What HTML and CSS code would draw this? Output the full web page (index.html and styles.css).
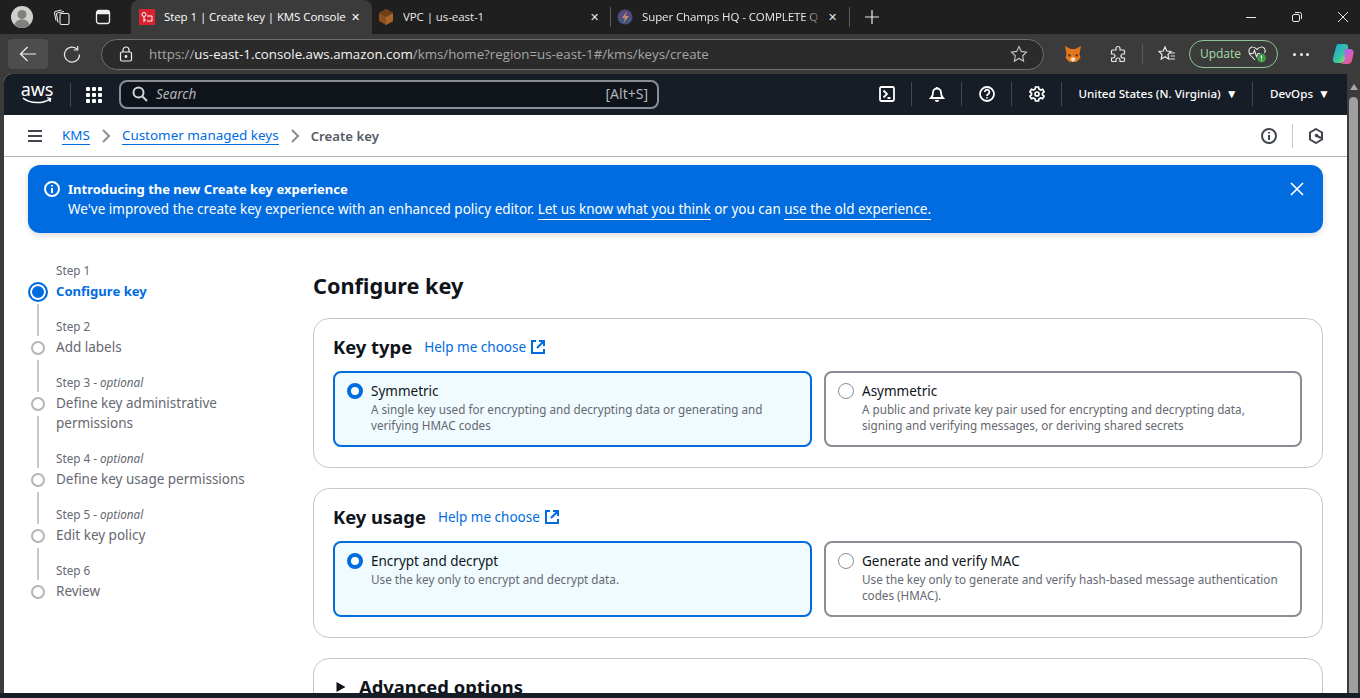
FILE: index.html
```html
<!DOCTYPE html>
<html lang="en">
<head>
<meta charset="utf-8">
<title>Step 1 | Create key | KMS Console</title>
<link rel="stylesheet" href="styles.css">
</head>
<body>
<div class="tabstrip">
  <div class="strip-left">
    <span class="avatar"><svg viewBox="0 0 22 22" width="22" height="22"><circle cx="11" cy="11" r="11" fill="#cfcfcb"/><circle cx="11" cy="8.500" r="4.500" fill="#7f7f7f"/><path d="M3.500 19c1-4 4-5.500 7.500-5.500s6.500 1.500 7.500 5.500a11 11 0 0 1-15 0z" fill="#7f7f7f"/></svg></span>
    <svg class="ic-chrome" viewBox="0 0 18 18" width="18" height="18" fill="none" stroke="#e8e8e8" stroke-width="1.100"><rect x="7" y="5.500" width="9" height="11" rx="1.500" transform="skewY(-8 11 11)"/><path d="M5 14.500L3.500 6.500c-.1-.8.300-1.300 1-1.500L11 3.500"/><path d="M3 12.500L1.500 5c-.1-.8.300-1.300 1-1.500L8.500 2"/></svg>
    <svg class="ic-chrome" viewBox="0 0 18 18" width="18" height="18" fill="none" stroke="#f0f0f0" stroke-width="1.300"><rect x="2.500" y="2.500" width="13" height="13" rx="2.500"/><path d="M3 4.500h12" stroke-width="3.500"/></svg>
  </div>
  <div class="tab tab-active">
    <svg class="fav" viewBox="0 0 16 16" width="16" height="16"><rect width="16" height="16" fill="#d9232e"/><circle cx="5" cy="5.500" r="2" fill="none" stroke="#fff"/><path d="M5 7.500v5.500M5 11h2M8 7h5v5H8" fill="none" stroke="#fff"/></svg>
    <span class="tab-title">Step 1 | Create key | KMS Console</span>
    <span class="tab-x">✕</span>
  </div>
  <div class="tab tab-two">
    <svg class="fav" viewBox="0 0 16 16" width="16" height="16"><path d="M8 0l7 4v8l-7 4-7-4V4z" fill="#8a4f1d"/><path d="M8 8l7-4v8l-7 4z" fill="#a8652a"/><path d="M8 0l7 4-7 4-7-4z" fill="#6f3f17"/></svg>
    <span class="tab-title">VPC | us-east-1</span>
    <span class="tab-x">✕</span>
  </div>
  <span class="tab-sep"></span>
  <div class="tab tab-three">
    <svg class="fav" viewBox="0 0 16 16" width="16" height="16"><circle cx="8" cy="8" r="7.500" fill="#54487e"/><path d="M1.500 10c2 4 7 5.500 11 3.500l2-4z" fill="#3c5a78"/><path d="M10 2L5 9h3l-1.500 5L12 7H8.500z" fill="#c58a6a"/></svg>
    <span class="tab-title tab-clip">Super Champs HQ - COMPLETE Q</span>
    <span class="tab-x">✕</span>
  </div>
  <span class="tab-sep"></span>
  <svg class="ic-plus" viewBox="0 0 16 16" width="16" height="16" stroke="#e8e8e8" stroke-width="1.200"><path d="M8 1v14M1 8h14"/></svg>
  <div class="window-btns">
    <svg viewBox="0 0 12 12" width="12" height="12" stroke="#e8e8e8"><path d="M1 6.500h10"/></svg>
    <svg viewBox="0 0 12 12" width="12" height="12" stroke="#e8e8e8" fill="none"><rect x="1.500" y="3.500" width="7" height="7" rx="1.500"/><path d="M4 1.500h4.500a2 2 0 0 1 2 2V8"/></svg>
    <svg viewBox="0 0 12 12" width="12" height="12" stroke="#e8e8e8"><path d="M1 1l10 10M11 1L1 11"/></svg>
  </div>
</div>

<div class="toolbar">
  <span class="back-btn"><svg viewBox="0 0 18 18" width="18" height="18" fill="none" stroke="#f0f0f0" stroke-width="1.200"><path d="M17 9H1.500M8.500 2l-7 7 7 7"/></svg></span>
  <svg class="reload" viewBox="0 0 18 18" width="18" height="18" fill="none" stroke="#e8e8e8" stroke-width="1.200"><path d="M14.500 4.500A7.500 7.500 0 1 0 16.500 9.500"/><path d="M14.700 1v4h-4"/></svg>
  <div class="omnibox">
    <svg class="lock" viewBox="0 0 14 16" width="14" height="16" fill="none" stroke="#f0f0f0" stroke-width="1.200"><rect x="1.500" y="6" width="11" height="9" rx="1.500"/><path d="M4 6V4a3 3 0 0 1 6 0v2"/><circle cx="7" cy="10.500" r=".8" fill="#f0f0f0"/></svg>
    <span class="url"><span class="url-dim">https://</span><span class="url-host">us-east-1.console.aws.amazon.com</span><span class="url-dim">/kms/home?region=us-east-1#/kms/keys/create</span></span>
    <svg viewBox="0 0 18 18" width="18" height="18" fill="none" stroke="#c4c4c4" stroke-width="1.100"><path d="M9 1.500l2.300 4.900 5.200.7-3.800 3.700.9 5.300L9 13.500l-4.600 2.600.9-5.300L1.500 7.100l5.200-.7z"/></svg>
  </div>
  <svg class="fox" viewBox="0 0 18 18" width="18" height="18"><path d="M1 1l6 3h4l6-3-1.500 8 1 4-4 4H5.500l-4-4 1-4z" fill="#e2761b"/><path d="M6 14l3 3 3-3-3-2z" fill="#f5e1cc"/><path d="M4 9l3 1-2 2zM14 9l-3 1 2 2z" fill="#3a2a1a"/></svg>
  <svg class="ext" viewBox="0 0 18 18" width="18" height="18" fill="none" stroke="#e8e8e8" stroke-width="1.200"><path d="M7 3.500a2 2 0 1 1 4 0V5h3.500a1 1 0 0 1 1 1v3h-1.500a2 2 0 1 0 0 4h1.500v2.500a1 1 0 0 1-1 1H11V15a2 2 0 1 0-4 0v1.500H3.500a1 1 0 0 1-1-1V13H4a2 2 0 1 0 0-4H2.500V6a1 1 0 0 1 1-1H7z"/></svg>
  <span class="bar-sep"></span>
  <svg class="favs" viewBox="0 0 18 18" width="18" height="18" fill="none" stroke="#e8e8e8" stroke-width="1.200"><path d="M7 2l1.800 4 4.200.5-3 3 .8 4.500L7 11.800 3.200 14l.8-4.500-3-3L5.200 6z"/><path d="M12 8h5M12.500 11h4.500M11.500 14h5.500"/></svg>
  <div class="update"><span>Update</span><svg viewBox="0 0 20 18" width="20" height="18" fill="none" stroke="#e8e8e8" stroke-width="1.100"><path d="M8 15L2.500 9C.5 5.500 3 1.500 6 2c2 .2 3 1.500 4 2.500C11 3.500 12 2.200 14 2c3-.5 5.500 3 3.500 6"/><path d="M2 8.500h4l1.500-3 2 6 1.500-3h2"/><circle cx="14.500" cy="13" r="4.500" fill="#3c9a4a" stroke="none"/><path d="M14.500 10.500v3M14.500 14.800v1" stroke="#fff"/></svg></div>
  <span class="dots"><i></i><i></i><i></i></span>
  <svg class="copilot" viewBox="0 0 22 22" width="22" height="22"><defs><linearGradient id="cp1" x1="0" y1="0" x2="1" y2="1"><stop offset="0" stop-color="#1f9fe8"/><stop offset=".6" stop-color="#39c79a"/><stop offset="1" stop-color="#e8d13c"/></linearGradient><linearGradient id="cp2" x1="0" y1="0" x2="1" y2="1"><stop offset="0" stop-color="#6d7ff0"/><stop offset=".5" stop-color="#d25fd0"/><stop offset="1" stop-color="#f05a50"/></linearGradient></defs><path d="M6.500 1h7c2 0 3 2 2.500 4L13 16.500c-.5 2-2 3.500-4 3.500H4C1.500 20 .5 17.500 1 15.500L4 4c.3-1.800 1.500-3 2.500-3z" fill="url(#cp1)"/><path d="M12 6h5.500c3 0 4.500 2 4 4.500l-1.500 7c-.5 2-2 3.500-4 3.500H9c3-1 3.500-3 4-5z" fill="url(#cp2)"/></svg>
</div>

<div class="viewport">
  <div class="page">
    <header class="topnav">
      <div class="aws-logo"><span class="aws-word">aws</span><svg viewBox="0 0 32 8" width="31" height="8" fill="none" stroke="#fff" stroke-width="1.500"><path d="M1 1c8 6 20 6 28 1M26 0.800l3.500.6-.7 3.600"/></svg></div>
      <span class="nav-sep nav-sep-logo"></span>
      <span class="grid9"><i></i><i></i><i></i><i></i><i></i><i></i><i></i><i></i><i></i></span>
      <div class="search">
        <svg viewBox="0 0 16 16" width="16" height="16" fill="none" stroke="#d1d5db" stroke-width="2"><circle cx="6.500" cy="6.500" r="5"/><path d="M10.500 10.500L15 15"/></svg>
        <span class="search-ph">Search</span>
        <span class="search-key">[Alt+S]</span>
      </div>
      <div class="nav-right">
        <span class="nav-item"><svg viewBox="0 0 16 16" width="16" height="16" fill="none" stroke="#fff" stroke-width="1.800"><rect x="1" y="1" width="14" height="14" rx="1.500"/><path d="M4.500 4.500L8 8l-3.500 3.500M8.500 12h3"/></svg></span>
        <span class="nav-item"><svg viewBox="0 0 16 16" width="16" height="16" fill="none" stroke="#fff" stroke-width="1.800"><path d="M2 12h12c-1.500-1.500-2-2.500-2-5.500a4 4 0 0 0-8 0c0 3-.5 4-2 5.500zM6.500 14a1.600 1.600 0 0 0 3 0M8 2.500V1"/></svg></span>
        <span class="nav-item"><svg viewBox="0 0 16 16" width="16" height="16" fill="none" stroke="#fff" stroke-width="1.800"><circle cx="8" cy="8" r="7"/><path d="M5.800 6a2.300 2.300 0 1 1 3.500 2c-.9.500-1.300 1-1.300 2M8 11.200v1.300"/></svg></span>
        <span class="nav-item"><svg viewBox="0 0 16 16" width="16" height="16" fill="none" stroke="#fff" stroke-width="1.700"><path d="M6.500 1h3l.4 2 1.700 1 2-.7 1.500 2.600-1.600 1.300v1.600l1.600 1.300-1.500 2.600-2-.7-1.700 1-.4 2h-3l-.4-2-1.700-1-2 .7L.9 10.100l1.600-1.300V7.200L.9 5.900l1.500-2.600 2 .7 1.700-1z"/><circle cx="8" cy="8" r="2"/></svg></span>
        <span class="nav-item nav-text nav-region">United States (N. Virginia) <b class="caret">▼</b></span>
        <span class="nav-item nav-text nav-user">DevOps <b class="caret">▼</b></span>
      </div>
    </header>

    <div class="crumbs">
      <svg class="burger" viewBox="0 0 16 16" width="16" height="16" stroke="#424650" stroke-width="2"><path d="M1 3h14M1 8h14M1 13h14"/></svg>
      <a class="crumb-link">KMS</a>
      <svg class="chev" viewBox="0 0 10 16" width="10" height="16" fill="none" stroke="#8c8c94" stroke-width="2"><path d="M2 2l6 6-6 6"/></svg>
      <a class="crumb-link">Customer managed keys</a>
      <svg class="chev" viewBox="0 0 10 16" width="10" height="16" fill="none" stroke="#8c8c94" stroke-width="2"><path d="M2 2l6 6-6 6"/></svg>
      <span class="crumb-now">Create key</span>
      <div class="crumb-tools">
        <svg viewBox="0 0 16 16" width="16" height="16" fill="none" stroke="#424650" stroke-width="2"><circle cx="8" cy="8" r="7"/><path d="M8 7v5M8 4v1.600"/></svg>
        <span class="tool-sep"></span>
        <svg viewBox="0 0 16 16" width="16" height="16" fill="none" stroke="#424650" stroke-width="2"><path d="M8 1l6 3.500v7L8 15l-6-3.500v-7z"/><circle cx="8.500" cy="7.500" r="1.800" fill="#424650" stroke="none"/><path d="M9 8l4 2" /></svg>
      </div>
    </div>

    <div class="banner">
      <svg class="banner-ic" viewBox="0 0 16 16" width="16" height="16" fill="none" stroke="#fff" stroke-width="2"><circle cx="8" cy="8" r="7"/><path d="M8 7v5M8 4v1.600"/></svg>
      <div class="banner-text">
        <div class="banner-title">Introducing the new Create key experience</div>
        <div>We've improved the create key experience with an enhanced policy editor. <a class="banner-link">Let us know what you think</a> or you can <a class="banner-link">use the old experience.</a></div>
      </div>
      <svg class="banner-x" viewBox="0 0 16 16" width="16" height="16" stroke="#fff" stroke-width="1.700"><path d="M2 2l12 12M14 2L2 14"/></svg>
    </div>

    <div class="main">
      <nav class="steps">
        <div class="step">
          <div class="rail"><span class="dot dot-on"></span><span class="line"></span></div>
          <div class="step-body"><div class="step-no">Step 1</div><div class="step-name step-name-on">Configure key</div></div>
        </div>
        <div class="step">
          <div class="rail"><span class="dot"></span><span class="line"></span></div>
          <div class="step-body"><div class="step-no">Step 2</div><div class="step-name">Add labels</div></div>
        </div>
        <div class="step">
          <div class="rail"><span class="dot"></span><span class="line"></span></div>
          <div class="step-body"><div class="step-no">Step 3 - <em>optional</em></div><div class="step-name">Define key administrative permissions</div></div>
        </div>
        <div class="step">
          <div class="rail"><span class="dot"></span><span class="line"></span></div>
          <div class="step-body"><div class="step-no">Step 4 - <em>optional</em></div><div class="step-name">Define key usage permissions</div></div>
        </div>
        <div class="step">
          <div class="rail"><span class="dot"></span><span class="line"></span></div>
          <div class="step-body"><div class="step-no">Step 5 - <em>optional</em></div><div class="step-name">Edit key policy</div></div>
        </div>
        <div class="step step-last">
          <div class="rail"><span class="dot"></span></div>
          <div class="step-body"><div class="step-no">Step 6</div><div class="step-name">Review</div></div>
        </div>
      </nav>

      <section class="content">
        <h1 class="page-title">Configure key</h1>

        <div class="card">
          <div class="card-head">
            <h2 class="card-title">Key type</h2>
            <a class="help">Help me choose</a>
            <svg viewBox="0 0 16 16" width="16" height="16" fill="none" stroke="#006ce0" stroke-width="2"><path d="M6 2H2v12h12v-4M9 2h5v5M14 2L7 9"/></svg>
          </div>
          <div class="options">
            <div class="option option-on">
              <span class="radio radio-on"></span>
              <div><div class="opt-title">Symmetric</div><div class="opt-desc">A single key used for encrypting and decrypting data or generating and verifying HMAC codes</div></div>
            </div>
            <div class="option">
              <span class="radio"></span>
              <div><div class="opt-title">Asymmetric</div><div class="opt-desc">A public and private key pair used for encrypting and decrypting data, signing and verifying messages, or deriving shared secrets</div></div>
            </div>
          </div>
        </div>

        <div class="card">
          <div class="card-head">
            <h2 class="card-title">Key usage</h2>
            <a class="help">Help me choose</a>
            <svg viewBox="0 0 16 16" width="16" height="16" fill="none" stroke="#006ce0" stroke-width="2"><path d="M6 2H2v12h12v-4M9 2h5v5M14 2L7 9"/></svg>
          </div>
          <div class="options">
            <div class="option option-on">
              <span class="radio radio-on"></span>
              <div><div class="opt-title">Encrypt and decrypt</div><div class="opt-desc">Use the key only to encrypt and decrypt data.</div></div>
            </div>
            <div class="option">
              <span class="radio"></span>
              <div><div class="opt-title">Generate and verify MAC</div><div class="opt-desc">Use the key only to generate and verify hash-based message authentication codes (HMAC).</div></div>
            </div>
          </div>
        </div>

        <div class="card card-adv">
          <div class="adv-head">
            <svg viewBox="0 0 12 12" width="12" height="12"><path d="M1.500 1l9 5-9 5z" fill="#0f141a"/></svg>
            <h2 class="card-title">Advanced options</h2>
          </div>
        </div>
      </section>
    </div>
  </div>
  <div class="scrollbar">
    <svg viewBox="0 0 8 6" width="8" height="6"><path d="M4 0l4 6H0z" fill="#a8a8a8"/></svg>
    <span class="thumb"></span>
  </div>
</div>
<div class="bottombar"></div>
</body>
</html>
```

FILE: styles.css
```css
* { box-sizing: border-box; }
html, body { margin: 0; height: 698px; overflow: hidden; }
body {
  display: flex;
  flex-direction: column;
  font-family: "Noto Sans", "Open Sans", sans-serif;
  font-size: 13.5px;
  line-height: 20px;
  background: #3b3b3b;
  color: #0f141a;
}
svg { flex: none; display: block; }
a { text-decoration: none; }

/* Tab strip */
.tabstrip {
  height: 34px;
  flex: none;
  display: flex;
  align-items: center;
  background: #1f1f1f;
  color: #e8e8e8;
  font-family: "Open Sans", "Noto Sans", sans-serif;
  font-size: 11.5px;
}
.strip-left { width: 131px; display: flex; align-items: center; padding-left: 11px; gap: 23px; flex: none; }
.avatar { width: 22px; height: 22px; margin-right: -3px; }
.tab { height: 34px; display: flex; align-items: center; flex: none; }
.tab-active { width: 241px; background: #3b3b3b; border-radius: 8px 8px 0 0; padding: 0 10px 0 8px; color: #fff; }
.tab-two { width: 238px; padding: 0 9px 0 6px; }
.tab-three { width: 238px; padding: 0 10px 0 6px; }
.fav { margin-right: 9px; }
.tab-title { flex: 1; white-space: nowrap; overflow: hidden; min-width: 0; letter-spacing: -.08px; }
.tab-clip { letter-spacing: -.1px; -webkit-mask-image: linear-gradient(90deg, #000 88%, transparent); mask-image: linear-gradient(90deg, #000 88%, transparent); }
.tab-x { font-size: 11px; width: 14px; text-align: center; }
.tab-sep { width: 1px; height: 20px; background: #5a5a5a; flex: none; }
.ic-plus { margin-left: 14px; }
.window-btns { margin-left: auto; display: flex; gap: 34px; padding-right: 11px; }

/* Toolbar */
.toolbar {
  height: 40px;
  flex: none;
  display: flex;
  align-items: center;
  background: #3b3b3b;
  padding: 0 6px 0 8px;
}
.back-btn { width: 40px; height: 30px; background: #4d4d4d; border-radius: 4px; display: flex; align-items: center; justify-content: center; }
.reload { margin-left: 15px; }
.omnibox {
  margin-left: 20px;
  width: 943px;
  height: 31px;
  display: flex;
  align-items: center;
  padding: 0 15px 0 17px;
  background: #2b2b2b;
  border: 1px solid #6e6e6e;
  border-radius: 16px;
}
.url { flex: 1; margin-left: 16px; font-family: "Open Sans", sans-serif; font-size: 13.3px; white-space: nowrap; }
.url-dim { color: #a6a6a6; }
.url-host { color: #f2f2f2; }
.fox { margin-left: 20px; }
.ext { margin-left: 27px; }
.bar-sep { width: 1px; height: 20px; background: #5a5a5a; margin-left: 15px; }
.favs { margin-left: 15px; }
.update {
  margin-left: 13px;
  width: 89px;
  height: 28px;
  border: 1px solid #8ec48f;
  border-radius: 14px;
  display: flex;
  align-items: center;
  justify-content: center;
  gap: 6px;
  color: #a9dba9;
  font-family: "Open Sans", sans-serif;
  font-size: 12px;
}
.dots { margin-left: 15px; width: 16px; display: flex; justify-content: space-between; }
.dots i { width: 3px; height: 3px; border-radius: 50%; background: #f0f0f0; }
.copilot { margin-left: 23px; }

/* Viewport */
.viewport { flex: 1; min-height: 0; display: flex; padding-left: 4px; }
.page { flex: 1; min-width: 0; display: flex; flex-direction: column; background: #fff; overflow: hidden; border-radius: 8px 0 0 0; }
.scrollbar { width: 13px; background: #3b3b3b; display: flex; flex-direction: column; align-items: center; padding-top: 10px; gap: 7px; flex: none; }
.thumb { width: 9px; flex: 1; background: #9f9f9f; border-radius: 5px 5px 0 0; }
.bottombar { height: 5px; flex: none; background: #161d26; }

/* AWS top nav */
.topnav {
  height: 41px;
  flex: none;
  display: flex;
  align-items: center;
  background: #161d26;
  color: #fff;
  padding-left: 17px;
}
.aws-logo { width: 32px; display: flex; flex-direction: column; align-items: center; height: 28px; margin-top: -2px; }
.aws-word { font-family: "Noto Sans", sans-serif; font-size: 18px; line-height: 18px; color: #fff; letter-spacing: -.2px; }
.aws-logo svg { margin-top: -1px; }
.nav-sep-logo { width: 1px; height: 24px; background: #424650; margin-left: 17px; }
.grid9 { margin-left: 15px; width: 16px; display: grid; grid-template-columns: repeat(3, 4px); gap: 2px; }
.grid9 i { width: 4px; height: 4px; background: #fff; border-radius: 1px; }
.search {
  margin: -1px 0 0 17px;
  width: 540px;
  height: 29px;
  display: flex;
  align-items: center;
  padding: 0 9px 0 11px;
  background: #0f141a;
  border: 2px solid #8c8c94;
  border-radius: 8px;
  color: #b4b4bb;
}
.search-ph { margin-left: 8px; font-style: italic; flex: 1; }
.search-key { font-size: 14px; }
.nav-right { display: flex; align-items: center; margin-left: auto; height: 24px; margin-top: -1px; }
.nav-item { width: 50px; height: 24px; display: flex; align-items: center; justify-content: center; border-right: 1px solid #424650; flex: none; }
.nav-text { font-size: 11.6px; font-weight: 500; gap: 4px; white-space: nowrap; }
.nav-region { width: 191px; padding-left: 2px; }
.nav-user { width: 94px; border-right: 0; }
.caret { font-size: 12px; font-weight: 400; margin-left: 1px; }

/* Breadcrumbs */
.crumbs {
  height: 42px;
  flex: none;
  display: flex;
  align-items: center;
  padding-left: 23px;
  border-bottom: 1px solid #b4b4bb;
  font-size: 13.45px;
}
.burger { margin-right: 19px; }
.crumb-link { color: #006ce0; border-bottom: 1px solid #006ce0; line-height: 17px; margin-top: 1px; }
.chev { margin: 0 11px; }
.crumb-now { font-size: 13.2px; font-weight: 600; color: #545b64; }
.crumb-tools { margin-left: auto; display: flex; align-items: center; gap: 15px; padding-right: 23px; }
.tool-sep { width: 1px; height: 24px; background: #c6c6cd; }

/* Banner */
.banner {
  flex: none;
  margin: 8px 24px 0;
  height: 68px;
  padding: 14px 18px 0 16px;
  display: flex;
  align-items: flex-start;
  background: #006ce0;
  color: #fff;
  border-radius: 12px;
  box-shadow: 0 2px 6px rgba(0, 7, 22, .15);
}
.banner-ic { margin: 2px 8px 0 0; }
.banner-text { flex: 1; }
.banner-title { font-size: 13px; font-weight: 700; }
.banner-link { color: #fff; border-bottom: 1px solid #fff; padding-bottom: 1px; }
.banner-x { margin-top: 2px; }

/* Layout */
.main { flex: 1; min-height: 0; display: flex; padding: 28px 24px 0; gap: 24px; }
.steps { width: 261px; flex: none; }
.step { display: flex; gap: 8px; }
.rail { width: 20px; flex: none; display: flex; flex-direction: column; align-items: center; padding-top: 21px; }
.dot { width: 14px; height: 14px; margin: 3px 0; border-radius: 50%; border: 2px solid #b4b4bb; flex: none; background: #fff; }
.dot-on { width: 20px; height: 20px; margin: 0; border: 2px solid #006ce0; background: #006ce0; box-shadow: inset 0 0 0 2px #fff; }
.line { width: 2px; flex: 1; background: #c6c6cd; margin-top: 2px; margin-bottom: -19px; }
.step-body { padding-bottom: 16px; flex: 1; }
.step-no { font-size: 11.7px; color: #656871; line-height: 19px; margin-bottom: 1px; }
.step-no em { font-style: italic; }
.step-name { color: #656871; width: 200px; }
.step-name-on { font-size: 13.1px; color: #006ce0; font-weight: 700; }

.content { flex: 1; min-width: 0; display: flex; flex-direction: column; gap: 20px; padding-top: 10px; }
.page-title { font-size: 21.7px; line-height: 30px; font-weight: 700; margin: 0 0 -3px; }
.card { flex: none; border: 1px solid #c6c6cd; border-radius: 16px; padding: 14px 19px 20px; height: 150px; }
.card-head { display: flex; align-items: center; height: 27px; }
.card-title { font-size: 18.4px; line-height: 27px; font-weight: 700; margin: 0; }
.help { color: #006ce0; margin-left: 12px; margin-right: 4px; }
.options { display: grid; grid-template-columns: 479px 478px; gap: 12px; margin-top: 11px; }
.option { height: 76px; display: flex; gap: 8px; padding: 8px 18px 0 12px; border: 2px solid #8c8c94; border-radius: 8px; background: #fff; }
.option-on { border-color: #006ce0; background: #f0fbff; }
.radio { width: 16px; height: 16px; border-radius: 50%; border: 1.500px solid #8c8c94; flex: none; margin-top: 2px; background: #fff; }
.radio-on { border: 4.500px solid #006ce0; }
.opt-title { line-height: 20px; }
.opt-desc { font-size: 11.7px; line-height: 16px; color: #656871; }
.card-adv { height: 60px; padding-top: 14px; }
.adv-head { display: flex; align-items: center; gap: 12px; margin-left: 2px; }
```
